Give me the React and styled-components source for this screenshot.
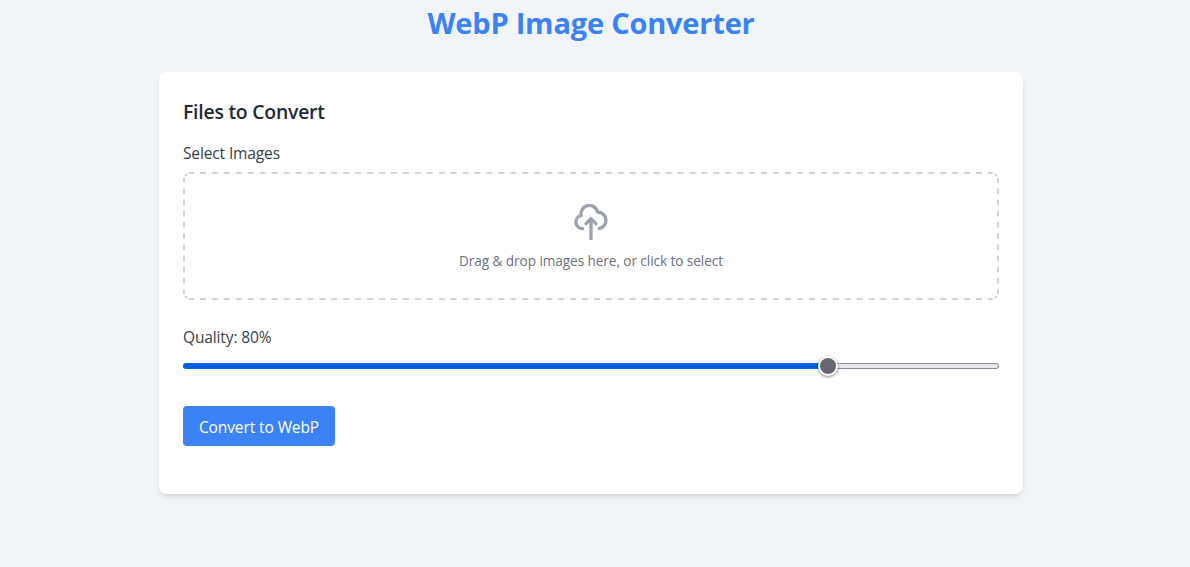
import React, { useState } from "react";
import styled, { createGlobalStyle } from "styled-components";

const GlobalStyle = createGlobalStyle`
  *, *::before, *::after { box-sizing: border-box; }
  body { margin: 0; background: #f1f5f9; font-family: "Open Sans", "Noto Sans", sans-serif; color: #1f2937; line-height: 24px; overflow: hidden; }
`;

const Page = styled.div`
  min-height: 567px;
  display: flex;
  flex-direction: column;
  align-items: center;
  padding: 5px 167px 0 159px;
`;

const Title = styled.h1`
  margin: 0 0 31px;
  font-size: 29px;
  line-height: 36px;
  letter-spacing: -0.2px;
  font-weight: 700;
  color: #3b82f6;
  white-space: nowrap;
`;

const Card = styled.main`
  width: 864px;
  height: 422px;
  padding: 24px;
  background: #fff;
  border-radius: 8px;
  box-shadow: 0 4px 6px -1px rgba(0, 0, 0, 0.1), 0 2px 4px -2px rgba(0, 0, 0, 0.1);
`;

const Heading = styled.h2`
  margin: 2px 0 15px;
  font-size: 19.4px;
  line-height: 28px;
  letter-spacing: -0.23px;
  font-weight: 600;
`;

const Label = styled.label`
  display: block;
  height: 24px;
  margin-bottom: ${(p) => p.$gap}px;
  font-size: 15.5px;
  letter-spacing: -0.13px;
  color: #374151;
`;

const DropZone = styled.div`
  position: relative;
  height: 128px;
  margin-bottom: 25px;
  padding-top: 30px;
  border-radius: 8px;
  display: flex;
  flex-direction: column;
  align-items: center;
  cursor: pointer;
`;

const DashedOutline = styled.svg`
  position: absolute;
  inset: 0;
  width: 100%;
  height: 100%;
  pointer-events: none;
`;

const UploadIcon = styled.svg`
  width: 40px;
  height: 40px;
  margin-bottom: 9px;
  color: #9ca3af;
`;

const Hint = styled.p`
  margin: 0;
  font-size: 13.6px;
  line-height: 20px;
  letter-spacing: -0.07px;
  color: #6b7280;
`;

const Slider = styled.input`
  appearance: none;
  display: block;
  width: 100%;
  height: 20px;
  margin: -2px 0 30px;
  background: transparent;
  --fill: ${(p) => ((p.value - 1) / 99) * 100}%;

  &::-webkit-slider-runnable-track {
    height: 6px;
    border: 1px solid transparent;
    border-radius: 3px;
    background:
      linear-gradient(#0a6cff, #0060df 20%, #0060df 80%, #0a6cff) left / var(--fill) 100% no-repeat border-box,
      linear-gradient(#e9e9ed, #e9e9ed) padding-box,
      linear-gradient(#8f8f9d, #8f8f9d) border-box;
  }
  &::-webkit-slider-thumb {
    appearance: none;
    width: 20px;
    height: 20px;
    margin-top: -8px;
    border: 2px solid #fff;
    border-radius: 50%;
    background: #676774;
    box-shadow: 0 1px 3px rgba(0, 0, 0, 0.5);
  }
`;

const Button = styled.button`
  height: 40px;
  width: 152px;
  padding: 2px 0 0;
  border: 0;
  border-radius: 4px;
  background: #3b82f6;
  color: #fff;
  font: 400 15.5px/24px "Open Sans", sans-serif;
  letter-spacing: -0.1px;
`;

export default function App() {
  const [quality, setQuality] = useState(80);
  return (
    <Page>
      <GlobalStyle />
      <Title>WebP Image Converter</Title>
      <Card>
        <Heading>Files to Convert</Heading>
        <Label $gap={7}>Select Images</Label>
        <DropZone>
          <DashedOutline viewBox="0 0 816 128" fill="none" stroke="#d1d5db" strokeWidth="2">
            <path d="M8 1H808M8 127H808" strokeDasharray="5.97 5.97" strokeDashoffset="2.985" />
            <path d="M1 8V120M815 8V120" strokeDasharray="5.6 5.6" strokeDashoffset="2.8" />
            <path d="M1 8A7 7 0 0 1 8 1M808 1A7 7 0 0 1 815 8M815 120A7 7 0 0 1 808 127M8 127A7 7 0 0 1 1 120" strokeDasharray="2 2 3 2 2 20" />
          </DashedOutline>
          <UploadIcon viewBox="0 0 24 24" fill="none" stroke="currentColor" strokeWidth="2" strokeLinecap="round" strokeLinejoin="round">
            <path d="M7 16a4 4 0 01-.88-7.903A5 5 0 1115.9 6L16 6a5 5 0 011 9.9M15 13l-3-3m0 0l-3 3m3-3v12" />
          </UploadIcon>
          <Hint>Drag &amp; drop images here, or click to select</Hint>
        </DropZone>
        <Label htmlFor="quality" $gap={9}>Quality: {quality}%</Label>
        <Slider id="quality" type="range" min="1" max="100" value={quality} onChange={(e) => setQuality(Number(e.target.value))} />
        <Button type="button">Convert to WebP</Button>
      </Card>
    </Page>
  );
}
